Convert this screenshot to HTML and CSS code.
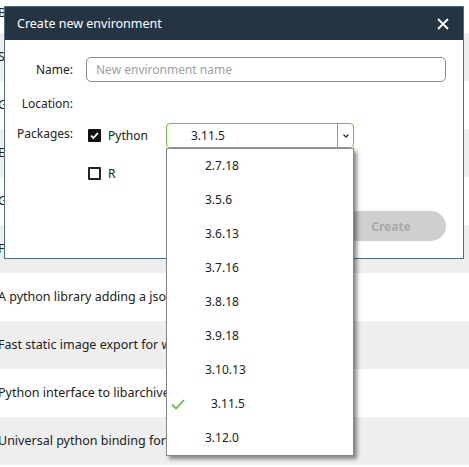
FILE: index.html
```html
<!DOCTYPE html>
<html>
<head>
  <meta charset="utf-8">
  <link rel="stylesheet" href="styles.css">
</head>
<body>
<div class="rows">
  <div class="row first">Bindings for the libgit2 library written in python and C, with helpers</div>
  <div class="row alt">Simple, fast, extensible JSON encoder and decoder</div>
  <div class="row">Google API client core library for Python</div>
  <div class="row alt">Easy access to the Earth Engine from Python</div>
  <div class="row">Geospatial data abstraction library bindings</div>
  <div class="row alt">Fast, simple object-to-object signaling</div>
  <div class="row">A python library adding a json log formatter</div>
  <div class="row alt">Fast static image export for web-based visualization</div>
  <div class="row">Python interface to libarchive</div>
  <div class="row alt">Universal python binding for the LAPACK library</div>
</div>

<div class="dialog">
  <div class="dialog-head">
    <span class="dialog-title">Create new environment</span>
    <svg class="close" width="12" height="12" viewBox="0 0 12 12">
      <path d="M1 1 L11 11 M11 1 L1 11" stroke="#fff" stroke-width="1.8" fill="none"/>
    </svg>
  </div>
  <div class="dialog-body">
    <div class="field">
      <label class="label">Name:</label>
      <div class="input">New environment name</div>
    </div>
    <div class="field loc">
      <label class="label">Location:</label>
      <div></div>
    </div>
    <div class="field pkgs">
      <label class="label">Packages:</label>
      <div class="pkg-list">
        <div class="pkg">
          <span class="box checked">
            <svg width="13" height="13" viewBox="0 0 13 13"><path d="M3 6.6 L5.4 9 L10 3.8" stroke="#fff" stroke-width="1.8" fill="none"/></svg>
          </span>
          <span class="pkg-name">Python</span>
          <div class="select">
            <span class="select-val">3.11.5</span>
            <span class="select-btn">
              <svg width="8" height="6" viewBox="0 0 8 6"><path d="M1.5 1.5 L4 4 L6.5 1.5" stroke="#333" stroke-width="1.3" fill="none"/></svg>
            </span>
            <ul class="menu">
              <li>2.7.18</li>
              <li>3.5.6</li>
              <li>3.6.13</li>
              <li>3.7.16</li>
              <li>3.8.18</li>
              <li>3.9.18</li>
              <li>3.10.13</li>
              <li class="sel">
                <svg class="tick" width="14" height="11" viewBox="0 0 14 11"><path d="M1 5.5 L5 9.5 L13 1" stroke="#5cb83c" stroke-width="1.6" fill="none"/></svg>
                3.11.5
              </li>
              <li>3.12.0</li>
            </ul>
          </div>
        </div>
        <div class="pkg r">
          <span class="box"></span>
          <span class="pkg-name">R</span>
        </div>
      </div>
    </div>
    <div class="foot">
      <button class="create">Create</button>
    </div>
  </div>
</div>
</body>
</html>
```

FILE: styles.css
```css
* { margin: 0; padding: 0; box-sizing: border-box }

body {
  font-family: "Noto Sans", "Open Sans", sans-serif;
  font-size: 12px;
  color: #222;
  background: #fff;
  overflow: hidden;
  width: 469px;
  height: 467px;
  position: relative;
}

.rows { margin-top: -15px }

.row {
  height: 48px;
  line-height: 48px;
  margin-left: -2px;
  white-space: nowrap;
  overflow: hidden;
  font-size: 12.5px;
}

.row.first { padding-top: 7px; line-height: 41px }

.row.alt { background: #eeeeee }

.dialog {
  position: absolute;
  left: 4px;
  top: 6px;
  width: 460px;
  height: 253px;
  border: 1px solid #4f6e84;
  background: #fff;
}

.dialog-head {
  height: 33px;
  background: #253443;
  color: #fff;
  display: flex;
  align-items: center;
  justify-content: space-between;
  padding: 0 14px 0 12px;
}

.dialog-title { font-size: 12.5px }

.dialog-body { padding: 17px 17px 0 0 }

.field {
  display: grid;
  grid-template-columns: 68px 1fr;
  column-gap: 13px;
  align-items: center;
}

.label { text-align: right }

.input {
  height: 25px;
  border: 1px solid #8a8a8a;
  border-radius: 5px;
  padding-left: 9px;
  line-height: 23px;
  color: #a0a0a0;
}

.loc { height: 18px; margin-top: 12px }

.pkgs { margin-top: 11px; align-items: start }
.pkgs .label { line-height: 22px }

.pkg {
  display: flex;
  align-items: center;
  height: 25px;
}

.pkg.r { margin-top: 13px }

.box {
  width: 13px;
  height: 13px;
  margin-left: 2px;
  border: 2px solid #222;
  border-radius: 1px;
  display: flex;
}

.box.checked {
  background: #111;
  border: none;
}

.pkg-name { margin-left: 7px; width: 58px }

.select {
  position: relative;
  width: 188px;
  height: 25px;
  border: 1px solid #6cbf4a;
  border-radius: 4px;
  display: flex;
  align-items: center;
}

.select-val { flex: 1; padding-left: 24px }

.select-btn {
  width: 16px;
  height: 23px;
  border-left: 1px solid #999;
  display: flex;
  align-items: center;
  justify-content: center;
}

.menu {
  position: absolute;
  left: -1px;
  top: 24px;
  width: 188px;
  list-style: none;
  background: #fff;
  border: 1px solid #888;
  box-shadow: 3px 3px 4px rgba(0, 0, 0, 0.45);
  z-index: 2;
}

.menu li {
  height: 34px;
  line-height: 34px;
  padding-left: 38px;
  position: relative;
}

.menu li.sel { padding-left: 44px }

.tick { position: absolute; left: 4px; top: 12px }

.foot {
  display: flex;
  justify-content: flex-end;
  margin-top: 25px;
}

.create {
  width: 110px;
  height: 30px;
  border: none;
  border-radius: 15px;
  background: #cfcfcf;
  color: #a9a9a9;
  font-family: inherit;
  font-size: 12px;
  font-weight: bold;
}
```
